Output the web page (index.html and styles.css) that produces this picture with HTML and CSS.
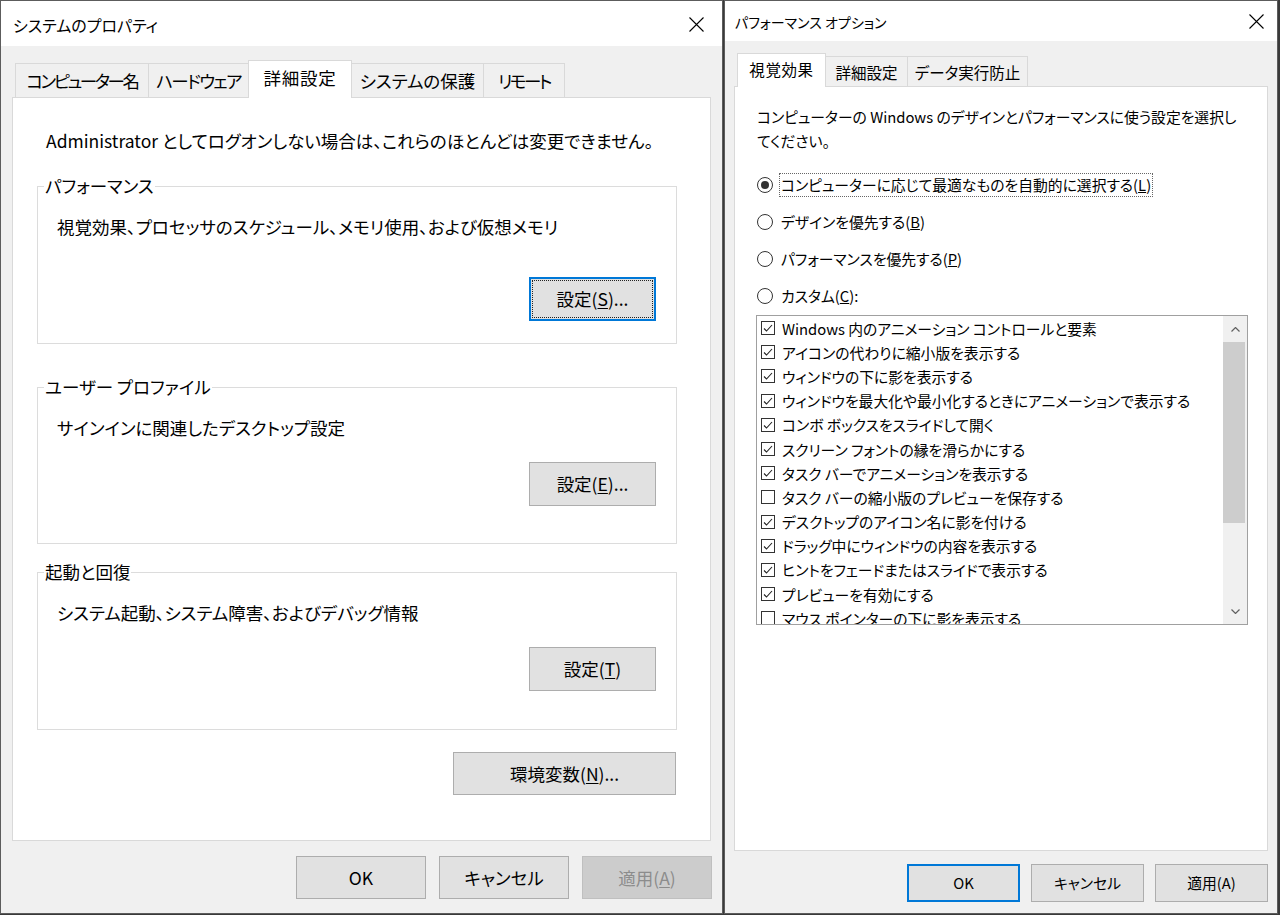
FILE: index.html
```html
<!DOCTYPE html>
<html lang="ja">
<head>
<meta charset="utf-8">
<title>システムのプロパティ</title>
<link rel="stylesheet" href="styles.css">
</head>
<body>
<div class="screen">
  <section class="dlg sys">
    <header class="titlebar">
      <span class="title">システムのプロパティ</span>
      <svg class="close" viewBox="0 0 15 15" width="15" height="15"><path d="M0.5 0.5 L14.5 14.5 M14.5 0.5 L0.5 14.5"/></svg>
    </header>
    <div class="client">
      <nav class="tabs">
        <div class="tab w-comp">コンピューター名</div>
        <div class="tab w-hw">ハードウェア</div>
        <div class="tab sel w-adv">詳細設定</div>
        <div class="tab w-prot">システムの保護</div>
        <div class="tab w-rem">リモート</div>
      </nav>
      <div class="panel">
        <p class="note">Administrator としてログオンしない場合は、これらのほとんどは変更できません。</p>
        <fieldset class="group g1">
          <legend>パフォーマンス</legend>
          <p class="gtext">視覚効果、プロセッサのスケジュール、メモリ使用、および仮想メモリ</p>
          <div class="btnrow"><button class="btn gbtn focus">設定(<u>S</u>)...</button></div>
        </fieldset>
        <fieldset class="group g2">
          <legend>ユーザー プロファイル</legend>
          <p class="gtext">サインインに関連したデスクトップ設定</p>
          <div class="btnrow"><button class="btn gbtn">設定(<u>E</u>)...</button></div>
        </fieldset>
        <fieldset class="group g3">
          <legend>起動と回復</legend>
          <p class="gtext">システム起動、システム障害、およびデバッグ情報</p>
          <div class="btnrow"><button class="btn gbtn">設定(<u>T</u>)</button></div>
        </fieldset>
        <div class="envrow"><button class="btn envbtn">環境変数(<u>N</u>)...</button></div>
      </div>
      <div class="actions">
        <button class="btn act">OK</button>
        <button class="btn act">キャンセル</button>
        <button class="btn act disabled">適用(<u>A</u>)</button>
      </div>
    </div>
  </section>

  <section class="dlg perf">
    <header class="titlebar">
      <span class="title">パフォーマンス オプション</span>
      <svg class="close" viewBox="0 0 15 15" width="15" height="15"><path d="M0.5 0.5 L14.5 14.5 M14.5 0.5 L0.5 14.5"/></svg>
    </header>
    <div class="client">
      <nav class="tabs">
        <div class="tab sel w-vis">視覚効果</div>
        <div class="tab w-det">詳細設定</div>
        <div class="tab w-dep">データ実行防止</div>
      </nav>
      <div class="panel">
        <p class="intro">コンピューターの Windows のデザインとパフォーマンスに使う設定を選択し<br>てください。</p>
        <div class="radios">
          <div class="radio"><span class="rb on"></span><span class="rlabel focused">コンピューターに応じて最適なものを自動的に選択する(<u>L</u>)</span></div>
          <div class="radio"><span class="rb"></span><span class="rlabel">デザインを優先する(<u>B</u>)</span></div>
          <div class="radio"><span class="rb"></span><span class="rlabel">パフォーマンスを優先する(<u>P</u>)</span></div>
          <div class="radio"><span class="rb"></span><span class="rlabel">カスタム(<u>C</u>):</span></div>
        </div>
        <div class="listbox">
          <div class="items">
            <div class="item"><span class="cb"><svg viewBox="0 0 12 12" width="12" height="12"><path d="M2 6.5 L4.5 9 L10 3"/></svg></span>Windows 内のアニメーション コントロールと要素</div>
            <div class="item"><span class="cb"><svg viewBox="0 0 12 12" width="12" height="12"><path d="M2 6.5 L4.5 9 L10 3"/></svg></span>アイコンの代わりに縮小版を表示する</div>
            <div class="item"><span class="cb"><svg viewBox="0 0 12 12" width="12" height="12"><path d="M2 6.5 L4.5 9 L10 3"/></svg></span>ウィンドウの下に影を表示する</div>
            <div class="item"><span class="cb"><svg viewBox="0 0 12 12" width="12" height="12"><path d="M2 6.5 L4.5 9 L10 3"/></svg></span>ウィンドウを最大化や最小化するときにアニメーションで表示する</div>
            <div class="item"><span class="cb"><svg viewBox="0 0 12 12" width="12" height="12"><path d="M2 6.5 L4.5 9 L10 3"/></svg></span>コンボ ボックスをスライドして開く</div>
            <div class="item"><span class="cb"><svg viewBox="0 0 12 12" width="12" height="12"><path d="M2 6.5 L4.5 9 L10 3"/></svg></span>スクリーン フォントの縁を滑らかにする</div>
            <div class="item"><span class="cb"><svg viewBox="0 0 12 12" width="12" height="12"><path d="M2 6.5 L4.5 9 L10 3"/></svg></span>タスク バーでアニメーションを表示する</div>
            <div class="item"><span class="cb"></span>タスク バーの縮小版のプレビューを保存する</div>
            <div class="item"><span class="cb"><svg viewBox="0 0 12 12" width="12" height="12"><path d="M2 6.5 L4.5 9 L10 3"/></svg></span>デスクトップのアイコン名に影を付ける</div>
            <div class="item"><span class="cb"><svg viewBox="0 0 12 12" width="12" height="12"><path d="M2 6.5 L4.5 9 L10 3"/></svg></span>ドラッグ中にウィンドウの内容を表示する</div>
            <div class="item"><span class="cb"><svg viewBox="0 0 12 12" width="12" height="12"><path d="M2 6.5 L4.5 9 L10 3"/></svg></span>ヒントをフェードまたはスライドで表示する</div>
            <div class="item"><span class="cb"><svg viewBox="0 0 12 12" width="12" height="12"><path d="M2 6.5 L4.5 9 L10 3"/></svg></span>プレビューを有効にする</div>
            <div class="item"><span class="cb"></span>マウス ポインターの下に影を表示する</div>
          </div>
          <div class="vscroll">
            <div class="arrow"><svg viewBox="0 0 9 5" width="9" height="5"><path d="M0.5 4.5 L4.5 0.5 L8.5 4.5"/></svg></div>
            <div class="thumb"></div>
            <div class="track"></div>
            <div class="arrow"><svg viewBox="0 0 9 5" width="9" height="5"><path d="M0.5 0.5 L4.5 4.5 L8.5 0.5"/></svg></div>
          </div>
        </div>
      </div>
      <div class="actions">
        <button class="btn act focus-blue">OK</button>
        <button class="btn act">キャンセル</button>
        <button class="btn act">適用(A)</button>
      </div>
    </div>
  </section>
</div>
</body>
</html>
```

FILE: styles.css
```css
* {
  box-sizing: border-box;
  margin: 0;
  padding: 0;
}

html, body {
  width: 1280px;
  height: 915px;
  overflow: hidden;
}

body {
  background: #3a3a3a;
  font-family: "Noto Sans CJK JP", "Noto Sans", sans-serif;
  font-feature-settings: "palt";
  color: #000;
}

.screen {
  display: flex;
  align-items: flex-start;
}

.dlg {
  background: #f0f0f0;
  border: 1px solid #5c5c5c;
  display: flex;
  flex-direction: column;
  height: 914px;
}

.sys {
  width: 723px;
  font-size: 17.5px;
}

.perf {
  width: 554px;
  margin-left: 1px;
  font-size: 14.8px;
}

/* title bar */
.titlebar {
  background: #fff;
  display: flex;
  align-items: center;
  justify-content: space-between;
  flex: none;
}

.sys .titlebar {
  height: 45px;
  padding: 2px 18px 0 12px;
}

.perf .titlebar {
  height: 40px;
  padding: 1px 13px 0 10px;
}

.sys .title {
  font-size: 16px;
}

.perf .title {
  font-size: 14px;
}

.close path {
  stroke: #000;
  stroke-width: 1.1;
  fill: none;
}

/* client area */
.client {
  flex: 1;
  display: flex;
  flex-direction: column;
}

.sys .client {
  padding: 14px 11px 0 11px;
}

.perf .client {
  padding: 12px 9px 0 9px;
}

/* tabs */
.tabs {
  display: flex;
  align-items: flex-end;
  padding-left: 3px;
  position: relative;
  z-index: 1;
  flex: none;
}

.sys .tabs { height: 37px; }
.perf .tabs { height: 33px; }

.tab {
  border: 1px solid #d9d9d9;
  border-bottom: none;
  background: #f0f0f0;
  display: flex;
  align-items: center;
  justify-content: center;
  margin-right: -1px;
  line-height: 1;
  white-space: nowrap;
}

.sys .tab { height: 34px; padding-top: 1px; font-size: 17.5px; }
.perf .tab { height: 30px; padding-top: 2px; font-size: 15.5px; }

.tab.sel {
  background: #fff;
  position: relative;
  z-index: 2;
  margin-bottom: -1px;
}

.sys .tab.sel { height: 38px; padding-top: 0; padding-bottom: 3px; }
.perf .tab.sel { height: 34px; padding-top: 0; padding-bottom: 1px; }

.w-comp { width: 134px; letter-spacing: -2.4px; }
.w-hw { width: 101px; letter-spacing: -1.6px; }
.w-adv { width: 104px; letter-spacing: 0.8px; }
.w-prot { width: 133px; }
.w-rem { width: 82px; letter-spacing: -2.4px; }

.w-vis { width: 89px; letter-spacing: 0.6px; }
.w-det { width: 83px; }
.w-dep { width: 121px; }

/* panel */
.panel {
  background: #fff;
  border: 1px solid #d9d9d9;
  flex: none;
}

.sys .panel {
  height: 744px;
  padding: 31px 33px 0 24px;
}

.perf .panel {
  height: 765px;
  padding: 18px 0 0 22px;
}

.note {
  line-height: 24px;
  margin-left: 9px;
  white-space: nowrap;
}

/* group boxes */
.group {
  border: 1px solid #dcdcdc;
  padding: 18px 20px 0 19px;
  min-width: 0;
}

.group legend {
  line-height: 22px;
  margin-left: -13px;
  padding: 0 1px;
}

.gtext {
  line-height: 24px;
  white-space: nowrap;
}

.btnrow {
  display: flex;
  justify-content: flex-end;
}

.g1 { margin-top: 22px; padding-bottom: 22px; }
.g1 .btnrow { margin-top: 38px; }
.g2 { margin-top: 32px; padding-bottom: 37px; }
.g2 .btnrow { margin-top: 22px; }
.g3 { margin-top: 17px; padding-bottom: 38px; }
.g3 .btnrow { margin-top: 22px; }

/* buttons */
.btn {
  font: inherit;
  font-feature-settings: "palt";
  color: #000;
  background: #e1e1e1;
  border: 1px solid #adadad;
  line-height: 1;
  display: flex;
  align-items: center;
  justify-content: center;
}

.btn u {
  text-underline-offset: 2px;
}

.gbtn {
  width: 127px;
  height: 44px;
}

.focus {
  border: 2px solid #0078d7;
  outline: 1px dotted #222;
  outline-offset: -4px;
}

.focus-blue {
  border: 2px solid #0078d7;
}

.envrow {
  display: flex;
  justify-content: flex-end;
  margin-top: 22px;
  padding-right: 1px;
}

.envbtn {
  width: 223px;
  height: 43px;
}

.actions {
  display: flex;
  justify-content: flex-end;
  flex: none;
}

.sys .actions {
  margin-top: 15px;
  margin-right: -1px;
  gap: 13px;
}

.sys .act {
  width: 130px;
  height: 43px;
}

.perf .actions {
  margin-top: 13px;
  gap: 11px;
}

.perf .act {
  width: 113px;
  height: 38px;
}

.btn.disabled {
  background: #cccccc;
  border-color: #bfbfbf;
  color: #8c8c8c;
}

/* performance options */
.intro {
  line-height: 24px;
}

.radios {
  margin-top: 20px;
  display: flex;
  flex-direction: column;
  gap: 13px;
}

.radio {
  height: 24px;
  display: flex;
  align-items: center;
}

.rb {
  width: 16px;
  height: 16px;
  border: 1px solid #333;
  border-radius: 50%;
  background: #fff;
  margin-right: 6px;
  display: flex;
  align-items: center;
  justify-content: center;
  flex: none;
}

.rb.on::after {
  content: "";
  width: 8px;
  height: 8px;
  border-radius: 50%;
  background: #333;
}

.rlabel {
  border: 1px dotted transparent;
  line-height: 22px;
  padding: 0 1px;
  white-space: nowrap;
}

.rlabel.focused {
  border-color: #666;
}

.listbox {
  margin-top: 7px;
  margin-left: -1px;
  width: 492px;
  height: 310px;
  border: 1px solid #a0a0a0;
  display: flex;
  overflow: hidden;
}

.items {
  flex: 1;
  margin-top: 0;
  overflow: hidden;
}

.item {
  height: 24.2px;
  display: flex;
  align-items: center;
  padding-left: 4px;
  white-space: nowrap;
}

.cb {
  width: 14px;
  height: 14px;
  border: 1px solid #333;
  background: #fff;
  margin-right: 7px;
  flex: none;
  display: flex;
}

.cb path {
  stroke: #222;
  stroke-width: 1.1;
  fill: none;
}

.vscroll {
  width: 24px;
  flex: none;
  background: #f0f0f0;
  display: flex;
  flex-direction: column;
}

.arrow {
  height: 26px;
  display: flex;
  align-items: center;
  justify-content: center;
  flex: none;
}

.arrow path {
  stroke: #606060;
  stroke-width: 1.2;
  fill: none;
}

.thumb {
  height: 181px;
  margin-right: 2px;
  background: #cdcdcd;
  flex: none;
}

.track {
  flex: 1;
}
```
